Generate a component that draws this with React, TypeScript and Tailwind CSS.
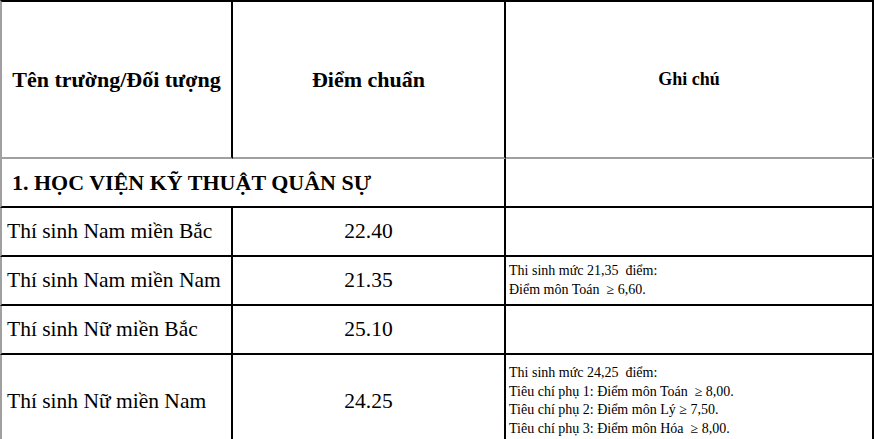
import React from 'react';

type Row = {
  name: string;
  score: string;
  notes: string[];
  tall?: boolean;
};

const ROWS: Row[] = [
  { name: 'Thí sinh Nam miền Bắc', score: '22.40', notes: [] },
  {
    name: 'Thí sinh Nam miền Nam',
    score: '21.35',
    notes: ['Thi sinh mức 21,35  điểm:', 'Điểm môn Toán  ≥ 6,60.'],
  },
  { name: 'Thí sinh Nữ miền Bắc', score: '25.10', notes: [] },
  {
    name: 'Thí sinh Nữ miền Nam',
    score: '24.25',
    notes: [
      'Thi sinh mức 24,25  điểm:',
      'Tiêu chí phụ 1: Điểm môn Toán  ≥ 8,00.',
      'Tiêu chí phụ 2: Điểm môn Lý ≥ 7,50.',
      'Tiêu chí phụ 3: Điểm môn Hóa  ≥ 8,00.',
    ],
    tall: true,
  },
];

export default function App() {
  return (
    <div className="h-[439px] w-[874px] overflow-hidden bg-white text-black [font-family:'Liberation_Serif','Times_New_Roman',serif]">
      <div className="grid grid-cols-[233px_273px_368px]">
        {/* header */}
        <div className="flex h-[159px] items-center justify-center border-t-2 border-r-2 border-b-2 border-l-2 border-t-black border-r-black border-b-[#a0a0a0] border-l-[#a0a0a0] text-[22px] font-bold">
          Tên trường/Đối tượng
        </div>
        <div className="flex h-[159px] items-center justify-center border-t-2 border-r-2 border-b-2 border-t-black border-r-black border-b-[#a0a0a0] text-[22px] font-bold">
          Điểm chuẩn
        </div>
        <div className="flex h-[159px] items-center justify-center border-t-2 border-r-2 border-b-2 border-t-black border-r-black border-b-[#a0a0a0] text-[18px] font-bold">
          Ghi chú
        </div>

        {/* section */}
        <div className="col-span-2 flex h-[49px] items-center border-r-2 border-b-2 border-l-2 border-r-black border-b-black border-l-[#a0a0a0] pl-[10px] text-[22px] font-bold">
          1. HỌC VIỆN KỸ THUẬT QUÂN SỰ
        </div>
        <div className="h-[49px] border-r-2 border-b-2 border-black" />

        {ROWS.map((row) => (
          <React.Fragment key={row.name}>
            <div
              className={`flex items-center border-r-2 border-b-2 border-l-2 border-r-black border-b-black border-l-[#a0a0a0] pl-[5px] text-[21.5px] ${row.tall ? 'h-[94px]' : 'h-[49px]'}`}
            >
              {row.name}
            </div>
            <div
              className={`flex items-center justify-center border-r-2 border-b-2 border-black text-[21.5px] ${row.tall ? 'h-[94px]' : 'h-[49px]'}`}
            >
              {row.score}
            </div>
            <div
              className={`flex flex-col justify-center border-r-2 border-b-2 border-black pl-[3px] text-[14px] leading-[18.5px] whitespace-pre ${row.tall ? 'h-[94px]' : 'h-[49px]'}`}
            >
              {row.notes.map((line) => (
                <span key={line}>{line}</span>
              ))}
            </div>
          </React.Fragment>
        ))}
      </div>
    </div>
  );
}
